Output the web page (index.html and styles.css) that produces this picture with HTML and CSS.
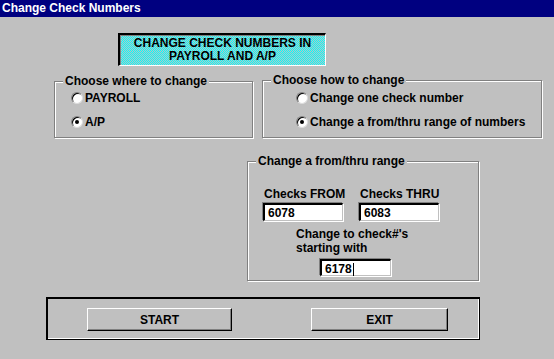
FILE: index.html
```html
<!DOCTYPE html>
<html lang="en">
<head>
    <meta charset="UTF-8">
    <meta name="viewport" content="width=device-width, initial-scale=1.0">
    <title>Change Check Numbers</title>
    <link rel="stylesheet" href="styles.css">
</head>
<body>

    <div class="window">
        <div class="titlebar">Change Check Numbers</div>

        <div class="banner">CHANGE CHECK NUMBERS IN<br>PAYROLL AND A/P</div>

        <!-- Choix du module et du mode -->
        <div class="row">
            <div class="group group-where">
                <span class="group-title">Choose where to change</span>
                <div class="option"><span class="radio"></span>PAYROLL</div>
                <div class="option"><span class="radio checked"></span>A/P</div>
            </div>
            <div class="group group-how">
                <span class="group-title">Choose how to change</span>
                <div class="option"><span class="radio"></span>Change one check number</div>
                <div class="option"><span class="radio checked"></span>Change a from/thru range of numbers</div>
            </div>
        </div>

        <!-- Plage de chèques -->
        <div class="group group-range">
            <span class="group-title">Change a from/thru range</span>
            <div class="range-cols">
                <div class="range-col">
                    <div class="field-label">Checks FROM</div>
                    <div class="field field-wide">6078</div>
                </div>
                <div class="range-col">
                    <div class="field-label">Checks THRU</div>
                    <div class="field field-wide">6083</div>
                </div>
            </div>
            <div class="start-label">Change to check#'s<br>starting with</div>
            <div class="field field-start">6178<span class="caret"></span></div>
        </div>

        <div class="actions">
            <button type="button" class="btn btn-start">START</button>
            <button type="button" class="btn btn-exit">EXIT</button>
        </div>
    </div>

</body>
</html>
```

FILE: styles.css
```css
body {
    margin: 0;
    padding: 0;
    background-color: #c0c0c0;
    font-family: "Liberation Sans", Arial, sans-serif;
    font-size: 12px;
    font-weight: bold;
    color: #000;
}
.window {
    width: 554px;
    height: 359px;
    overflow: hidden;
}
.titlebar {
    height: 17px;
    line-height: 17px;
    padding-left: 2px;
    background-color: #000080;
    color: #fff;
}
.banner {
    box-sizing: border-box;
    width: 208px;
    height: 33px;
    margin: 16px 0 0 118px;
    padding-top: 2px;
    line-height: 13px;
    text-align: center;
    border-style: solid;
    border-width: 2px 1px 1px 2px;
    border-color: #000 #fff #fff #000;
    box-shadow: inset 1px 1px 0 #808080;
    background-color: #60e8f0;
    background-image: conic-gradient(#00ffff 25%, #c0c0c0 0 50%, #00ffff 0 75%, #c0c0c0 0);
    background-size: 2px 2px;
}
.row {
    display: flex;
    align-items: flex-start;
    margin-top: 14px;
}
.group {
    position: relative;
    box-sizing: border-box;
    border: 1px solid #808080;
    box-shadow: 1px 1px 0 #fff, inset 1px 1px 0 #fff;
}
.group-title {
    position: absolute;
    top: -8px;
    left: 8px;
    padding: 0 2px;
    line-height: 14px;
    background-color: #c0c0c0;
}
.group-where {
    width: 199px;
    height: 57px;
    margin: 1px 0 0 54px;
    padding: 10px 0 0 16px;
}
.group-how {
    width: 280px;
    height: 58px;
    margin-left: 9px;
    padding: 11px 0 0 33px;
}
.option {
    display: flex;
    align-items: center;
    height: 12px;
    margin-bottom: 12px;
}
.radio {
    position: relative;
    box-sizing: border-box;
    width: 12px;
    height: 12px;
    margin-right: 2px;
    border-radius: 50%;
    background-color: #fff;
    border: 1px solid;
    border-color: #808080 #dcdcdc #dcdcdc #808080;
    box-shadow: inset 1px 1px 0 #000;
}
.radio.checked::after {
    content: "";
    position: absolute;
    left: 3px;
    top: 3px;
    width: 4px;
    height: 4px;
    border-radius: 50%;
    background-color: #000;
}
.group-range {
    width: 232px;
    height: 120px;
    margin: 23px 0 0 247px;
    padding: 25px 0 0 15px;
}
.range-cols {
    display: flex;
    gap: 16px;
}
.range-col {
    width: 80px;
}
.field-label {
    line-height: 14px;
    margin-left: 1px;
    white-space: nowrap;
}
.field {
    box-sizing: border-box;
    height: 18px;
    padding: 2px 0 0 3px;
    line-height: 13px;
    background-color: #fff;
    border-style: solid;
    border-width: 2px 1px 1px 2px;
    border-color: #000 #c0c0c0 #c0c0c0 #000;
    box-shadow: -1px -1px 0 #808080, 1px 1px 0 #fff;
}
.field-wide {
    width: 80px;
    margin-top: 2px;
}
.start-label {
    margin: 6px 0 0 33px;
    line-height: 14px;
}
.field-start {
    width: 71px;
    height: 17px;
    margin: 4px 0 0 57px;
}
.caret {
    display: inline-block;
    width: 1px;
    height: 13px;
    margin-left: 1px;
    vertical-align: top;
    background-color: #000;
}
.actions {
    box-sizing: border-box;
    display: flex;
    width: 434px;
    height: 43px;
    margin: 16px 0 0 46px;
    padding: 9px 0 0 39px;
    border-style: solid;
    border-width: 2px 1px 1px 2px;
    border-color: #000;
    box-shadow: inset -1px -1px 0 #fff;
}
.btn {
    box-sizing: border-box;
    height: 23px;
    padding: 0;
    font-family: inherit;
    font-size: 12px;
    font-weight: bold;
    color: #000;
    background-color: #c0c0c0;
    border-style: solid;
    border-width: 1px;
    border-color: #fff #000 #000 #fff;
    box-shadow: inset -1px -1px 0 #808080;
}
.btn-start {
    width: 145px;
}
.btn-exit {
    width: 137px;
    margin-left: 79px;
}
```
